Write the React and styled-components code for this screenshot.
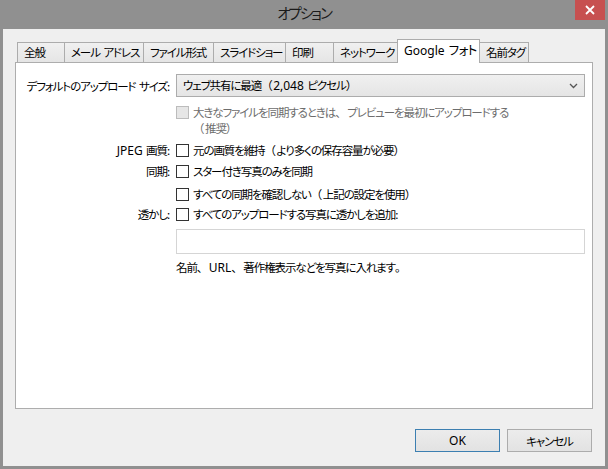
import React from "react";
import styled, { createGlobalStyle } from "styled-components";

const Global = createGlobalStyle`
  html, body { margin: 0; padding: 0; }
  body {
    width: 608px; height: 469px; overflow: hidden;
    font-family: "Noto Sans CJK JP", "Noto Sans", sans-serif;
    font-size: 11.5px;
    letter-spacing: -1.1px;
    word-spacing: 2px;
    font-feature-settings: "palt";
    color: #000;
  }
`;

/* full-width punctuation (、。（）) keeps its em box as in Meiryo UI */
const Fw = styled.span`
  font-feature-settings: normal;
  letter-spacing: 0.5px;
`;

/* latin runs in a Segoe-like face without tightening */
const Lat = styled.span`
  font-family: "Noto Sans", "Open Sans", sans-serif;
  letter-spacing: 0;
  font-size: 12px;
`;

const Window = styled.div`
  width: 608px; height: 469px;
  background: #909090;
  display: flex; flex-direction: column;
  box-sizing: border-box;
`;

const TitleBar = styled.div`
  height: 29px; flex: none;
  display: flex; align-items: center; justify-content: center;
  position: relative;
`;

const Title = styled.div`
  font-size: 14.5px; color: #1a1a1a;
  letter-spacing: -2px;
  margin-top: -5px;
`;

const CloseBtn = styled.div`
  position: absolute; right: 3px; top: 0;
  width: 30px; height: 20px;
  background: #c75050;
  display: flex; align-items: center; justify-content: center;
`;

const Client = styled.div`
  flex: 1;
  margin: 0 3px 3px 3px;
  background: #efefef;
  padding: 10px 12px 14px 12px;
  display: flex; flex-direction: column;
  box-sizing: border-box;
`;

const TabStrip = styled.div`
  display: flex; align-items: flex-end;
  height: 23px; padding-left: 2px;
  position: relative; z-index: 2;
`;

const Tab = styled.div`
  box-sizing: border-box;
  width: ${p => p.$w}px;
  height: ${p => (p.$active ? 24 : 20)}px;
  margin-bottom: ${p => (p.$active ? -1 : 0)}px;
  margin-right: -1px;
  border: 1px solid #acacac;
  border-bottom: none;
  background: ${p => (p.$active ? "#fff" : "linear-gradient(#f0f0f0, #e5e5e5)")};
  display: flex; align-items: center;
  padding-left: 6px;
  padding-bottom: ${p => (p.$active ? 4 : 1)}px;
  white-space: nowrap;
  font-size: ${p => (p.$active ? 12.5 : 11.5)}px;
  letter-spacing: ${p => (p.$active ? -0.6 : -1.1)}px;
  position: relative; z-index: ${p => (p.$active ? 3 : 1)};
`;

const Panel = styled.div`
  box-sizing: border-box;
  height: 347px; flex: none;
  background: #fff;
  border: 1px solid #adadad;
  padding: 11px 7px 0 10px;
  display: flex; flex-direction: column;
`;

const Row = styled.div`
  display: grid;
  grid-template-columns: 146px 1fr;
  column-gap: 4px;
  margin-top: ${p => p.$mt || 0}px;
  min-height: ${p => p.$h || 20}px;
  align-items: ${p => (p.$top ? "start" : "center")};
`;

const Label = styled.div`
  text-align: right;
  white-space: nowrap;
  padding-right: 3px;
`;

const Select = styled.div`
  box-sizing: border-box;
  height: 23px;
  border: 1px solid #acacac;
  background: linear-gradient(#f0f0f0, #e5e5e5);
  display: flex; align-items: center; justify-content: space-between;
  padding: 0 6px 0 6px;
`;

const CheckLine = styled.label`
  display: flex; align-items: ${p => (p.$top ? "flex-start" : "center")};
  gap: 4px;
  color: ${p => (p.$disabled ? "#6d6d6d" : "#000")};
  line-height: 16px;
  white-space: nowrap;
`;

const Box = styled.span`
  flex: none;
  box-sizing: border-box;
  width: 13px; height: 13px;
  border: 1px solid ${p => (p.$disabled ? "#bcbcbc" : "#333")};
  background: ${p => (p.$disabled ? "#e6e6e6" : "#fff")};
  margin-top: ${p => (p.$top ? 2 : 0)}px;
`;

const TextInput = styled.div`
  box-sizing: border-box;
  height: 25px;
  border: 1px solid #d5d5d5;
  background: #fff;
`;

const Hint = styled.div`
  line-height: 16px;
  white-space: nowrap;
`;

const Footer = styled.div`
  display: flex; justify-content: flex-end;
  gap: 7px;
  margin-top: 20px;
  padding-right: 1px;
`;

const Button = styled.div`
  box-sizing: border-box;
  width: 85px; height: 23px;
  border: 1px solid ${p => (p.$default ? "#3c7fb1" : "#acacac")};
  background: linear-gradient(#ececec, #e2e2e2);
  display: flex; align-items: center; justify-content: center;
`;

const tabs = [
  ["全般", 48],
  ["メール アドレス", 80],
  ["ファイル形式", 71],
  ["スライドショー", 73],
  ["印刷", 49],
  ["ネットワーク", 65],
  [<span><Lat>Google</Lat> フォト</span>, 83, true],
  ["名前タグ", 50],
];

export default function App() {
  return (
    <>
      <Global />
      <Window>
        <TitleBar>
          <Title>オプション</Title>
          <CloseBtn>
            <svg width="10" height="10" viewBox="0 0 10 10">
              <path d="M1 1L9 9M9 1L1 9" stroke="#fff" strokeWidth="1.8" />
            </svg>
          </CloseBtn>
        </TitleBar>
        <Client>
          <TabStrip>
            {tabs.map(([t, w, a], i) => (
              <Tab key={i} $w={w} $active={a}>{t}</Tab>
            ))}
          </TabStrip>
          <Panel>
            <Row $h={23}>
              <Label>デフォルトのアップロード サイズ:</Label>
              <Select>
                <span>ウェブ共有に最適<Fw>（</Fw><Lat>2,048</Lat> ピクセル<Fw>）</Fw></span>
                <svg width="9" height="6" viewBox="0 0 9 6">
                  <path d="M1 1L4.5 4.5L8 1" stroke="#555" strokeWidth="1.3" fill="none" />
                </svg>
              </Select>
            </Row>
            <Row $mt={7} $h={32} $top>
              <span />
              <CheckLine $disabled $top>
                <Box $disabled $top />
                <span>大きなファイルを同期するときは<Fw>、</Fw>プレビューを最初にアップロードする<br /><Fw>（</Fw>推奨<Fw>）</Fw></span>
              </CheckLine>
            </Row>
            <Row $mt={4}>
              <Label><Lat>JPEG</Lat> 画質:</Label>
              <CheckLine><Box /><span>元の画質を維持<Fw>（</Fw>より多くの保存容量が必要<Fw>）</Fw></span></CheckLine>
            </Row>
            <Row $mt={1}>
              <Label>同期:</Label>
              <CheckLine><Box />スター付き写真のみを同期</CheckLine>
            </Row>
            <Row $mt={3}>
              <span />
              <CheckLine><Box /><span>すべての同期を確認しない<Fw>（</Fw>上記の設定を使用<Fw>）</Fw></span></CheckLine>
            </Row>
            <Row>
              <Label>透かし:</Label>
              <CheckLine><Box />すべてのアップロードする写真に透かしを追加:</CheckLine>
            </Row>
            <Row $mt={5} $h={25}>
              <span />
              <TextInput />
            </Row>
            <Row $mt={5} $h={16}>
              <span />
              <Hint>名前<Fw>、</Fw><Lat>URL</Lat><Fw>、</Fw>著作権表示などを写真に入れます<Fw>。</Fw></Hint>
            </Row>
          </Panel>
          <Footer>
            <Button $default><Lat>OK</Lat></Button>
            <Button>キャンセル</Button>
          </Footer>
        </Client>
      </Window>
    </>
  );
}
